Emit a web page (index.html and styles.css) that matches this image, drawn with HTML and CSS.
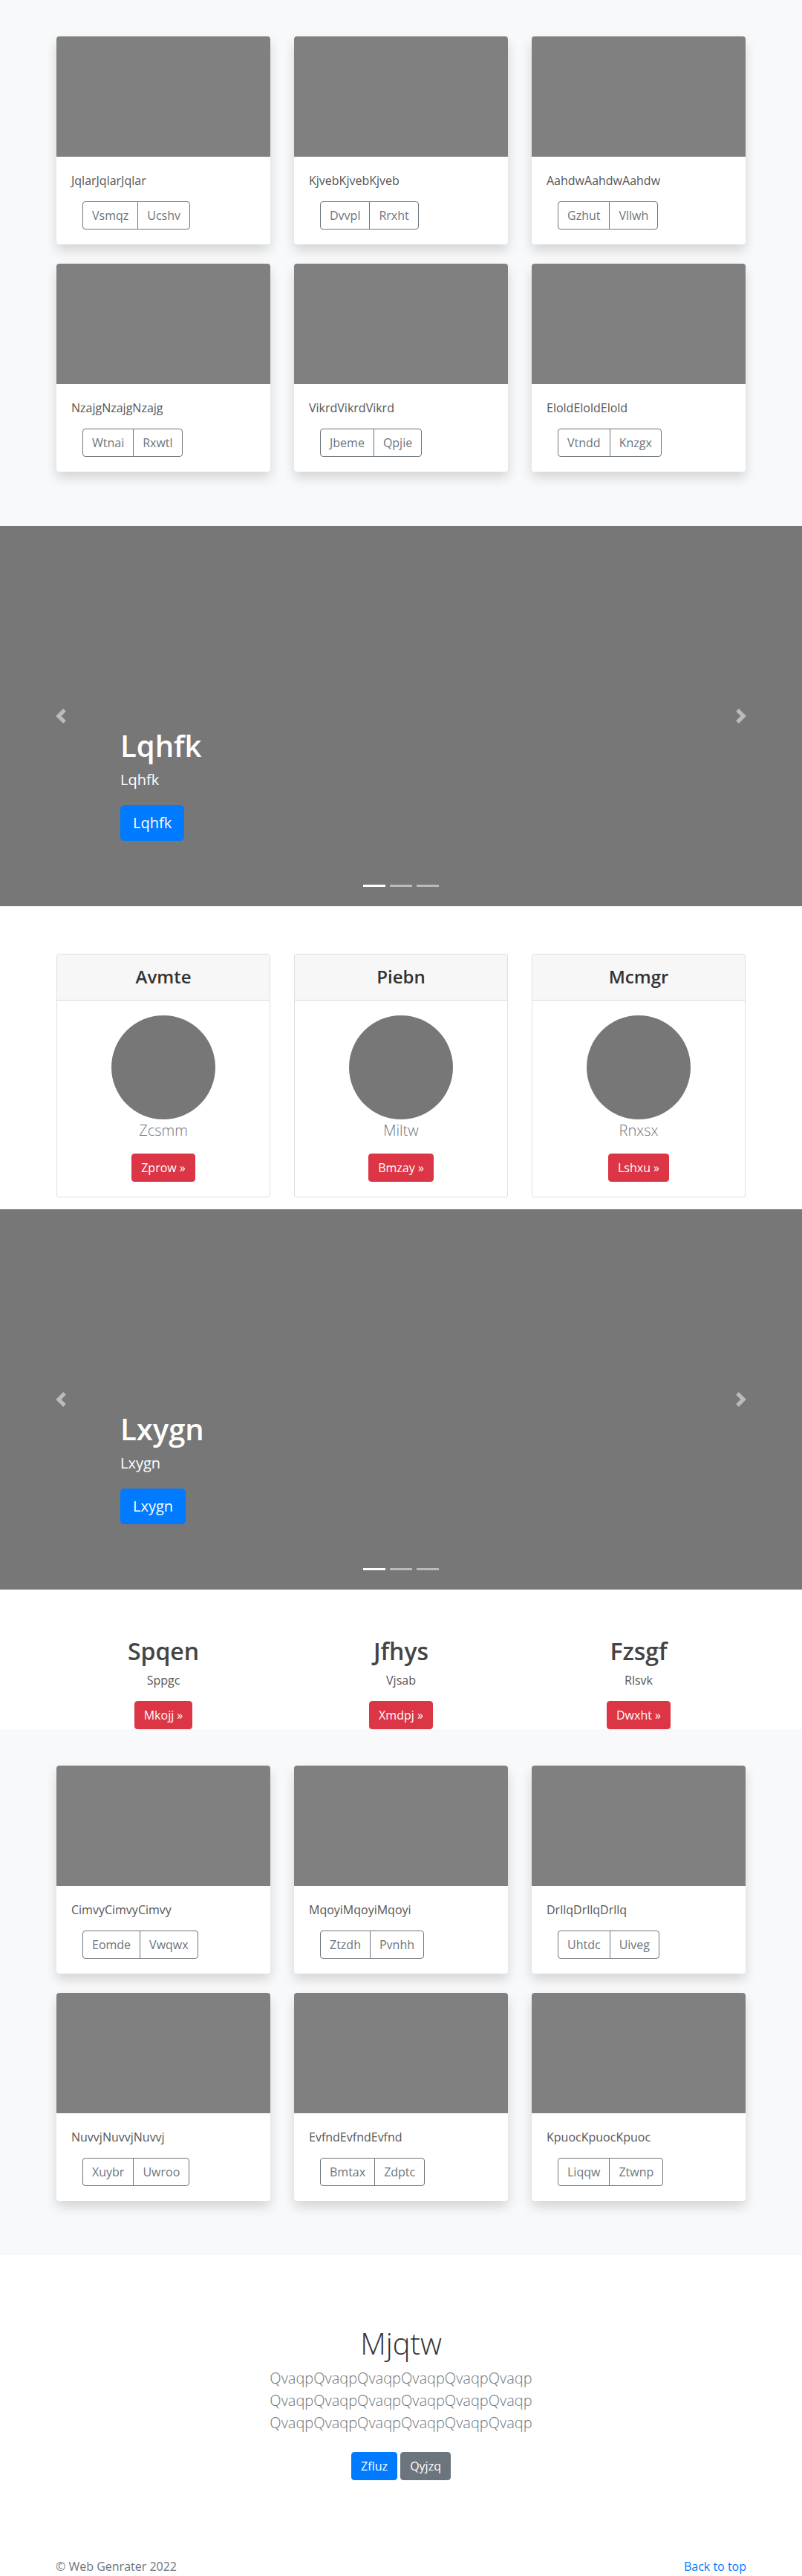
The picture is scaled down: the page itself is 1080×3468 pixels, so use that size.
FILE: index.html
```html
<!DOCTYPE html>
<html lang="en">
<head>
<meta charset="utf-8">
<title>Web Genrater</title>
<link rel="stylesheet" href="styles.css">
</head>
<body>

<section class="album">
  <div class="container">
    <div class="card-grid">
      <div class="card"><div class="card-img"></div><div class="card-body"><p class="card-text">JqlarJqlarJqlar</p><div class="btn-group"><button class="btn btn-outline">Vsmqz</button><button class="btn btn-outline">Ucshv</button></div></div></div>
      <div class="card"><div class="card-img"></div><div class="card-body"><p class="card-text">KjvebKjvebKjveb</p><div class="btn-group"><button class="btn btn-outline">Dvvpl</button><button class="btn btn-outline">Rrxht</button></div></div></div>
      <div class="card"><div class="card-img"></div><div class="card-body"><p class="card-text">AahdwAahdwAahdw</p><div class="btn-group"><button class="btn btn-outline">Gzhut</button><button class="btn btn-outline">Vllwh</button></div></div></div>
      <div class="card"><div class="card-img"></div><div class="card-body"><p class="card-text">NzajgNzajgNzajg</p><div class="btn-group"><button class="btn btn-outline">Wtnai</button><button class="btn btn-outline">Rxwtl</button></div></div></div>
      <div class="card"><div class="card-img"></div><div class="card-body"><p class="card-text">VikrdVikrdVikrd</p><div class="btn-group"><button class="btn btn-outline">Jbeme</button><button class="btn btn-outline">Qpjie</button></div></div></div>
      <div class="card"><div class="card-img"></div><div class="card-body"><p class="card-text">EloldEloldElold</p><div class="btn-group"><button class="btn btn-outline">Vtndd</button><button class="btn btn-outline">Knzgx</button></div></div></div>
    </div>
  </div>
</section>

<div class="carousel">
  <a class="carousel-control prev" href="#">
    <svg width="20" height="20" viewBox="0 0 8 8" fill="#fff"><path d="M5.25 0l-4 4 4 4 1.5-1.5L4.25 4l2.5-2.5L5.25 0z"/></svg>
  </a>
  <div class="carousel-caption">
    <h1 class="caption-title">Lqhfk</h1>
    <p class="caption-text">Lqhfk</p>
    <div class="caption-actions"><a class="btn btn-lg btn-primary" href="#">Lqhfk</a></div>
  </div>
  <a class="carousel-control next" href="#">
    <svg width="20" height="20" viewBox="0 0 8 8" fill="#fff"><path d="M2.75 0l-1.5 1.5L3.75 4l-2.5 2.5L2.75 8l4-4-4-4z"/></svg>
  </a>
  <div class="carousel-indicators"><span class="indicator active"></span><span class="indicator"></span><span class="indicator"></span></div>
</div>

<section class="pricing">
  <div class="container">
    <div class="card-grid">
      <div class="pcard"><div class="pcard-header"><h4 class="pcard-title">Avmte</h4></div><div class="pcard-body"><div class="circle"></div><p class="lead-muted">Zcsmm</p><a class="btn btn-danger" href="#">Zprow »</a></div></div>
      <div class="pcard"><div class="pcard-header"><h4 class="pcard-title">Piebn</h4></div><div class="pcard-body"><div class="circle"></div><p class="lead-muted">Miltw</p><a class="btn btn-danger" href="#">Bmzay »</a></div></div>
      <div class="pcard"><div class="pcard-header"><h4 class="pcard-title">Mcmgr</h4></div><div class="pcard-body"><div class="circle"></div><p class="lead-muted">Rnxsx</p><a class="btn btn-danger" href="#">Lshxu »</a></div></div>
    </div>
  </div>
</section>

<div class="carousel">
  <a class="carousel-control prev" href="#">
    <svg width="20" height="20" viewBox="0 0 8 8" fill="#fff"><path d="M5.25 0l-4 4 4 4 1.5-1.5L4.25 4l2.5-2.5L5.25 0z"/></svg>
  </a>
  <div class="carousel-caption">
    <h1 class="caption-title">Lxygn</h1>
    <p class="caption-text">Lxygn</p>
    <div class="caption-actions"><a class="btn btn-lg btn-primary" href="#">Lxygn</a></div>
  </div>
  <a class="carousel-control next" href="#">
    <svg width="20" height="20" viewBox="0 0 8 8" fill="#fff"><path d="M2.75 0l-1.5 1.5L3.75 4l-2.5 2.5L2.75 8l4-4-4-4z"/></svg>
  </a>
  <div class="carousel-indicators"><span class="indicator active"></span><span class="indicator"></span><span class="indicator"></span></div>
</div>

<section class="marketing">
  <div class="container">
    <div class="marketing-grid">
      <div class="feature"><h2 class="feature-title">Spqen</h2><p class="feature-text">Sppgc</p><a class="btn btn-danger" href="#">Mkojj »</a></div>
      <div class="feature"><h2 class="feature-title">Jfhys</h2><p class="feature-text">Vjsab</p><a class="btn btn-danger" href="#">Xmdpj »</a></div>
      <div class="feature"><h2 class="feature-title">Fzsgf</h2><p class="feature-text">Rlsvk</p><a class="btn btn-danger" href="#">Dwxht »</a></div>
    </div>
  </div>
</section>

<section class="album">
  <div class="container">
    <div class="card-grid">
      <div class="card"><div class="card-img"></div><div class="card-body"><p class="card-text">CimvyCimvyCimvy</p><div class="btn-group"><button class="btn btn-outline">Eomde</button><button class="btn btn-outline">Vwqwx</button></div></div></div>
      <div class="card"><div class="card-img"></div><div class="card-body"><p class="card-text">MqoyiMqoyiMqoyi</p><div class="btn-group"><button class="btn btn-outline">Ztzdh</button><button class="btn btn-outline">Pvnhh</button></div></div></div>
      <div class="card"><div class="card-img"></div><div class="card-body"><p class="card-text">DrllqDrllqDrllq</p><div class="btn-group"><button class="btn btn-outline">Uhtdc</button><button class="btn btn-outline">Uiveg</button></div></div></div>
      <div class="card"><div class="card-img"></div><div class="card-body"><p class="card-text">NuvvjNuvvjNuvvj</p><div class="btn-group"><button class="btn btn-outline">Xuybr</button><button class="btn btn-outline">Uwroo</button></div></div></div>
      <div class="card"><div class="card-img"></div><div class="card-body"><p class="card-text">EvfndEvfndEvfnd</p><div class="btn-group"><button class="btn btn-outline">Bmtax</button><button class="btn btn-outline">Zdptc</button></div></div></div>
      <div class="card"><div class="card-img"></div><div class="card-body"><p class="card-text">KpuocKpuocKpuoc</p><div class="btn-group"><button class="btn btn-outline">Liqqw</button><button class="btn btn-outline">Ztwnp</button></div></div></div>
    </div>
  </div>
</section>

<section class="jumbotron">
  <div class="jumbo-inner">
    <h1 class="jumbo-title">Mjqtw</h1>
    <p class="jumbo-lead">QvaqpQvaqpQvaqpQvaqpQvaqpQvaqp QvaqpQvaqpQvaqpQvaqpQvaqpQvaqp QvaqpQvaqpQvaqpQvaqpQvaqpQvaqp</p>
    <p class="jumbo-actions"><a class="btn btn-primary jumbo-btn" href="#">Zfluz</a> <a class="btn btn-secondary jumbo-btn" href="#">Qyjzq</a></p>
  </div>
</section>

<footer class="footer">
  <div class="footer-inner">
    <a class="back-top" href="#">Back to top</a>
    <p class="copy">© Web Genrater 2022</p>
  </div>
</footer>

</body>
</html>
```

FILE: styles.css
```css
* { box-sizing: border-box; }

body {
  margin: 0;
  font-family: "Open Sans", "Segoe UI", Arial, sans-serif;
  font-size: 16px;
  line-height: 1.5;
  color: #212529;
  background: #fff;
}

.container {
  width: 960px;
  margin: 0 auto;
}

.card-grid {
  display: grid;
  grid-template-columns: repeat(3, 288px);
  column-gap: 32px;
  row-gap: 26px;
  padding: 0 16px;
}

/* Album */
.album {
  background: #f8f9fa;
  padding: 49px 0 73px;
}

.card {
  background: #fff;
  border-radius: 4px;
  overflow: hidden;
  box-shadow: 0 8px 16px rgba(0, 0, 0, 0.15);
}

.card-img {
  height: 162px;
  background: #808080;
}

.card-body {
  padding: 20px;
}

.card-text {
  margin: 0 0 16px;
  color: #555;
}

.btn-group {
  display: inline-flex;
  margin-left: 15px;
}

.btn {
  display: inline-block;
  font-family: inherit;
  font-size: 16px;
  line-height: 24px;
  padding: 6px 12px;
  border: 1px solid transparent;
  border-radius: 4px;
  text-decoration: none;
  background: transparent;
  cursor: pointer;
}

.btn-outline {
  color: #6c757d;
  border-color: #6c757d;
  background: #fff;
}

.btn-group .btn-outline:first-child {
  border-top-right-radius: 0;
  border-bottom-right-radius: 0;
}

.btn-group .btn-outline + .btn-outline {
  margin-left: -1px;
  border-top-left-radius: 0;
  border-bottom-left-radius: 0;
}

.btn-primary {
  background: #007bff;
  border-color: #007bff;
  color: #fff;
}

.btn-secondary {
  background: #6c757d;
  border-color: #6c757d;
  color: #fff;
}

.btn-danger {
  background: #dc3545;
  border-color: #dc3545;
  color: #fff;
}

.btn-lg {
  font-size: 20px;
  line-height: 30px;
  padding: 8px 16px;
  border-radius: 5px;
}

/* Carousel */
.carousel {
  position: relative;
  height: 512px;
  background: #777;
  margin-bottom: 64px;
}

.carousel-control {
  position: absolute;
  top: 246px;
  width: 20px;
  height: 20px;
  opacity: 0.5;
}

.carousel-control svg { display: block; }

.carousel-control.prev { left: 72px; }
.carousel-control.next { right: 72px; }

.carousel-caption {
  position: absolute;
  left: 162px;
  right: 162px;
  bottom: 88px;
  color: #fff;
}

.caption-title {
  margin: 0 0 7px;
  font-size: 40px;
  line-height: 1.2;
  font-weight: 600;
}

.caption-text {
  margin: 0 0 19px;
  font-size: 20px;
  line-height: 30px;
}

.caption-actions {
  display: flex;
}

.carousel-indicators {
  position: absolute;
  left: 0;
  right: 0;
  bottom: 26px;
  display: flex;
  justify-content: center;
  gap: 6px;
}

.indicator {
  width: 30px;
  height: 3px;
  background: rgba(255, 255, 255, 0.5);
}

.indicator.active {
  background: #fff;
}

/* Pricing cards */
.pricing {
  margin-bottom: 16px;
}

.pricing .card-grid {
  row-gap: 0;
}

.pcard {
  border: 1px solid rgba(0, 0, 0, 0.125);
  border-radius: 4px;
  overflow: hidden;
  background: #fff;
}

.pcard-header {
  background: #f7f7f7;
  border-bottom: 1px solid rgba(0, 0, 0, 0.125);
  padding: 16px 20px;
  text-align: center;
}

.pcard-title {
  margin: 0;
  font-size: 24px;
  line-height: 1.2;
  font-weight: 600;
  color: #333;
}

.pcard-body {
  padding: 20px;
  text-align: center;
}

.circle {
  width: 140px;
  height: 140px;
  border-radius: 50%;
  background: #777;
  margin: 0 auto;
}

.lead-muted {
  margin: 0 0 16px;
  font-size: 20px;
  line-height: 30px;
  font-weight: 300;
  color: #6c757d;
}

/* Marketing */
.marketing-grid {
  display: grid;
  grid-template-columns: repeat(3, 320px);
  text-align: center;
}

.feature {
  line-height: 0;
}

.feature-title {
  margin: 0 0 8px;
  font-size: 32px;
  line-height: 1.2;
  font-weight: 600;
  color: #444;
}

.feature-text {
  margin: 0 0 16px;
  line-height: 24px;
  color: #555;
}

.feature .btn {
  vertical-align: top;
}

/* Jumbotron */
.jumbotron {
  padding: 95px 0 48px;
  text-align: center;
  background: #fff;
}

.jumbo-inner {
  width: 450px;
  margin: 0 auto;
}

.jumbo-title {
  margin: 0 0 8px;
  font-size: 40px;
  line-height: 1.2;
  font-weight: 300;
  color: #333;
}

.jumbo-lead {
  margin: 0 0 16px;
  font-size: 20px;
  line-height: 30px;
  font-weight: 300;
  color: #6c757d;
}

.jumbo-actions {
  margin: 0;
}

.jumbo-btn {
  margin: 8px 0;
}

/* Footer */
.footer {
  padding: 48px 0 48px;
  color: #6c757d;
}

.footer-inner {
  width: 960px;
  margin: 0 auto;
  padding: 0 15px;
  display: flex;
  flex-direction: row-reverse;
  justify-content: space-between;
}

.copy {
  margin: 0;
}

.back-top {
  color: #007bff;
  text-decoration: none;
}
```
